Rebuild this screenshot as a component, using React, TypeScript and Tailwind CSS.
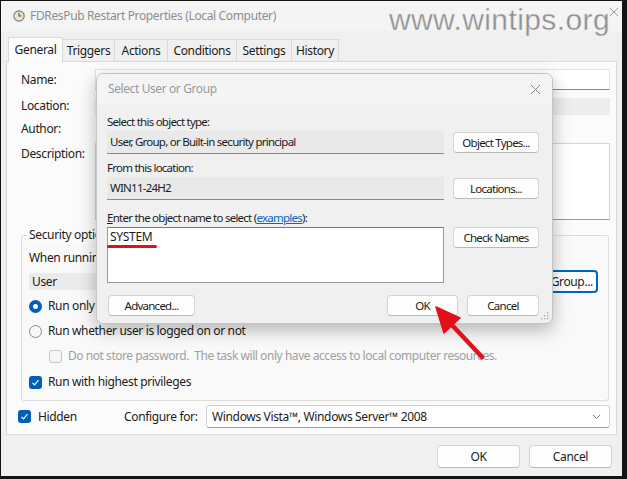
import React from "react";

type Kids = { children?: React.ReactNode; className?: string };

function Btn({ children, className = "" }: Kids) {
  return (
    <div
      className={`flex items-center justify-center rounded-[4px] border border-[#d3d3d3] border-b-[#b9b9b9] bg-[#fdfdfd] text-[#1b1b1b] ${className}`}
    >
      {children}
    </div>
  );
}

function ClockIcon() {
  return (
    <svg width="12" height="12" viewBox="0 0 12 12">
      <circle cx="6" cy="6" r="5.2" fill="#ece4cc" stroke="#7d7d7d" strokeWidth="1.2" />
      <path d="M6 2.8V6h2.6" fill="none" stroke="#555" strokeWidth="1.1" />
    </svg>
  );
}

function Radio({ on }: { on?: boolean }) {
  return on ? (
    <span className="flex h-[13px] w-[13px] items-center justify-center rounded-full bg-[#005fb8]">
      <span className="h-[5px] w-[5px] rounded-full bg-white" />
    </span>
  ) : (
    <span className="h-[13px] w-[13px] rounded-full border border-[#8a8a8a] bg-[#f7f7f7]" />
  );
}

function Check({ on, disabled }: { on?: boolean; disabled?: boolean }) {
  if (on)
    return (
      <span className="flex h-[13px] w-[13px] items-center justify-center rounded-[3px] bg-[#005fb8]">
        <svg width="9" height="9" viewBox="0 0 9 9">
          <path d="M1.5 4.8l2 2 4-4.6" fill="none" stroke="white" strokeWidth="1.2" />
        </svg>
      </span>
    );
  return (
    <span
      className={`h-[13px] w-[13px] rounded-[3px] border ${
        disabled ? "border-[#c6c6c6] bg-[#f6f6f6]" : "border-[#8a8a8a] bg-white"
      }`}
    />
  );
}

const TABS = [
  { name: "Triggers", w: "w-[52px]" },
  { name: "Actions", w: "w-[53px]" },
  { name: "Conditions", w: "w-[69px]" },
  { name: "Settings", w: "w-[55px]" },
  { name: "History", w: "w-[47px]" },
];

function SelectDialog() {
  return (
    <div className="absolute left-[96px] top-[73px] flex h-[251px] w-[457px] flex-col overflow-hidden rounded-[7px] border border-[#c4c4c4] bg-[#f0f0f0] shadow-[0_6px_18px_rgba(0,0,0,0.28)]">
      <div className="flex h-[30px] shrink-0 items-center justify-between bg-[#f4f4f4] pl-[11px] pr-[11px]">
        <span className="text-[12px] tracking-[-0.4px] text-[#9a9a9a]">Select User or Group</span>
        <svg width="11" height="11" viewBox="0 0 11 11">
          <path d="M1 1l9 9M10 1l-9 9" stroke="#8a8a8a" strokeWidth="1" />
        </svg>
      </div>
      <div className="flex flex-1 flex-col pl-[10px] pr-[13px] text-[11.5px] tracking-[-0.75px] text-[#1b1b1b]">
        <div className="mt-[10px] leading-[16px]">Select this object type:</div>
        <div className="mt-[1px] flex items-center gap-[9px]">
          <div className="flex h-[23px] flex-1 items-center border-b border-[#8a8a8a] bg-[#e9e9e9] pl-[3px]">
            User, Group, or Built-in security principal
          </div>
          <Btn className="h-[21px] w-[86px]">Object Types...</Btn>
        </div>
        <div className="mt-[6px] leading-[16px]">From this location:</div>
        <div className="mt-[1px] flex items-center gap-[9px]">
          <div className="flex h-[23px] flex-1 items-center border-b border-[#8a8a8a] bg-[#e9e9e9] pl-[3px]">
            WIN11-24H2
          </div>
          <Btn className="h-[21px] w-[86px]">Locations...</Btn>
        </div>
        <div className="mt-[10px] leading-[16px]">
          <span className="underline">E</span>nter the object name to select (
          <span className="text-[#0066cc] underline">examples</span>):
        </div>
        <div className="mt-[1px] flex items-start gap-[9px]">
          <div className="relative h-[56px] flex-1 border border-[#9a9a9a] border-t-[#7a7a7a] bg-white pl-[2px]">
            <span className="text-[12px] leading-[16px] tracking-[-0.3px]">SYSTEM</span>
            <div className="absolute left-[-1px] top-[17px] h-[3px] w-[50px] rounded-full bg-[#e3101a]" />
          </div>
          <Btn className="h-[21px] w-[86px]">Check Names</Btn>
        </div>
        <div className="mt-[12px] flex items-center">
          <Btn className="ml-[1px] h-[21px] w-[87px]">Advanced...</Btn>
          <div className="flex-1" />
          <Btn className="h-[21px] w-[71px]">OK</Btn>
          <Btn className="ml-[9px] h-[21px] w-[72px]">Cancel</Btn>
        </div>
      </div>
      <svg className="absolute bottom-[3px] right-[3px]" width="9" height="9" viewBox="0 0 9 9">
        <g fill="#b0b0b0">
          <rect x="7" y="1" width="1.4" height="1.4" />
          <rect x="4" y="4" width="1.4" height="1.4" />
          <rect x="7" y="4" width="1.4" height="1.4" />
          <rect x="1" y="7" width="1.4" height="1.4" />
          <rect x="4" y="7" width="1.4" height="1.4" />
          <rect x="7" y="7" width="1.4" height="1.4" />
        </g>
      </svg>
    </div>
  );
}

function RedArrow() {
  return (
    <svg className="pointer-events-none absolute left-0 top-0" width="627" height="479" viewBox="0 0 627 479">
      <path d="M482 357L452 325" stroke="#e3101a" strokeWidth="4.5" strokeLinecap="round" />
      <path d="M436 307L460 318L444 333Z" fill="#e3101a" stroke="#e3101a" strokeWidth="1.5" strokeLinejoin="round" />
    </svg>
  );
}

export default function App() {
  return (
    <div className="relative h-[479px] w-[627px] bg-[#141414] pb-[3px] pl-[1px] pr-[5px] pt-[1px] font-['Noto_Sans',sans-serif]">
      <div className="flex h-full flex-col bg-[#f0f0f0] text-[12px] tracking-[-0.35px] text-[#1b1b1b]">
        {/* title bar */}
        <div className="flex h-[30px] shrink-0 items-center bg-[#f4f4f4] pl-[12px]">
          <ClockIcon />
          <span className="ml-[5px] text-[#8e8e8e]">FDResPub Restart Properties (Local Computer)</span>
        </div>

        {/* tabs */}
        <div className="mt-[5px] flex h-[25px] shrink-0 items-end pl-[7px]">
          <div className="relative z-10 -mb-px flex h-[25px] w-[55px] items-center justify-center border border-b-0 border-[#d9d9d9] bg-[#fbfbfb]">
            General
          </div>
          {TABS.map((t) => (
            <div
              key={t.name}
              className={`flex h-[22px] items-center justify-center border border-l-0 border-b-0 border-[#d9d9d9] bg-[#f0f0f0] ${t.w}`}
            >
              {t.name}
            </div>
          ))}
        </div>

        {/* panel */}
        <div className="mx-[5px] flex h-[374px] shrink-0 flex-col border border-[#d9d9d9] bg-[#fbfbfb] pl-[14px] pr-[6px]">
          <div className="mt-[7px] flex items-center">
            <span className="w-[74px]">Name:</span>
            <div className="h-[21px] flex-1 border border-[#e3e3e3] border-b-[#8a8a8a] bg-white" />
          </div>
          <div className="mt-[7px] flex items-center">
            <span className="w-[74px]">Location:</span>
            <div className="h-[17px] flex-1 bg-[#ededed]" />
          </div>
          <div className="mt-[5px] flex h-[18px] items-center">
            <span className="w-[74px]">Author:</span>
          </div>
          <div className="mt-[5px] flex items-start">
            <span className="mt-[2px] w-[74px]">Description:</span>
            <div className="h-[77px] flex-1 border border-[#d6d6d6] border-b-[#9a9a9a] bg-white" />
          </div>

          {/* security options */}
          <div className="relative mr-[1px] mt-[15px] h-[166px] rounded-[3px] border border-[#dcdcdc] bg-[#f9f9f9] pl-[7px]">
            <span className="absolute left-[6px] top-[-9px] bg-[#fbfbfb] px-[1px] leading-[16px]">Security options</span>
            <div className="mt-[14px] leading-[16px]">When running the task, use the following user account:</div>
            <div className="mt-[4px] flex items-center pr-[10px]">
              <div className="flex h-[17px] flex-1 items-center bg-[#ebebeb] pl-[3px]">User</div>
              <div className="ml-[9px] flex h-[23px] w-[140px] items-center justify-end rounded-[4px] border-2 border-[#0067c0] bg-white pr-[3px]">
                Change User or Group...
              </div>
            </div>
            <div className="mt-[4px] flex h-[18px] items-center gap-[6px]">
              <Radio on />
              <span>Run only when user is logged on</span>
            </div>
            <div className="mt-[7px] flex h-[18px] items-center gap-[6px]">
              <Radio />
              <span>Run whether user is logged on or not</span>
            </div>
            <div className="ml-[20px] mt-[7px] flex h-[18px] items-center gap-[6px] text-[#a0a0a0]">
              <Check disabled />
              <span className="whitespace-pre tracking-[-0.45px]">
                Do not store password.  The task will only have access to local computer resources.
              </span>
            </div>
            <div className="mt-[8px] flex h-[18px] items-center gap-[6px]">
              <Check on />
              <span>Run with highest privileges</span>
            </div>
          </div>

          <div className="mt-[4px] flex items-center">
            <div className="ml-[-3px] flex w-[106px] items-center gap-[7px]">
              <Check on />
              <span>Hidden</span>
            </div>
            <span className="w-[82px]">Configure for:</span>
            <div className="flex h-[23px] flex-1 items-center justify-between rounded-[3px] border border-[#d3d3d3] border-b-[#a0a0a0] bg-white pl-[5px] pr-[8px]">
              <span>Windows Vista™, Windows Server™ 2008</span>
              <svg width="9" height="6" viewBox="0 0 9 6">
                <path d="M1 1l3.5 3.5L8 1" fill="none" stroke="#777" strokeWidth="1" />
              </svg>
            </div>
          </div>
        </div>

        {/* footer */}
        <div className="mt-[10px] flex justify-end gap-[9px] pr-[10px]">
          <Btn className="h-[23px] w-[83px]">OK</Btn>
          <Btn className="h-[23px] w-[83px]">Cancel</Btn>
        </div>
      </div>

      {/* watermark */}
      <div className="absolute right-[17px] top-[-3px] font-['Liberation_Sans',sans-serif] text-[30px] tracking-[0.4px] text-[#8f8f8f] [-webkit-text-stroke:0.4px_#e8e8e8]">
        www.wintips.org
      </div>
      <svg className="absolute right-[8px] top-[7px]" width="10" height="10" viewBox="0 0 10 10">
        <path d="M1 1l8 8M9 1l-8 8" stroke="#9a9a9a" strokeWidth="1" />
      </svg>

      <SelectDialog />
      <RedArrow />
    </div>
  );
}
